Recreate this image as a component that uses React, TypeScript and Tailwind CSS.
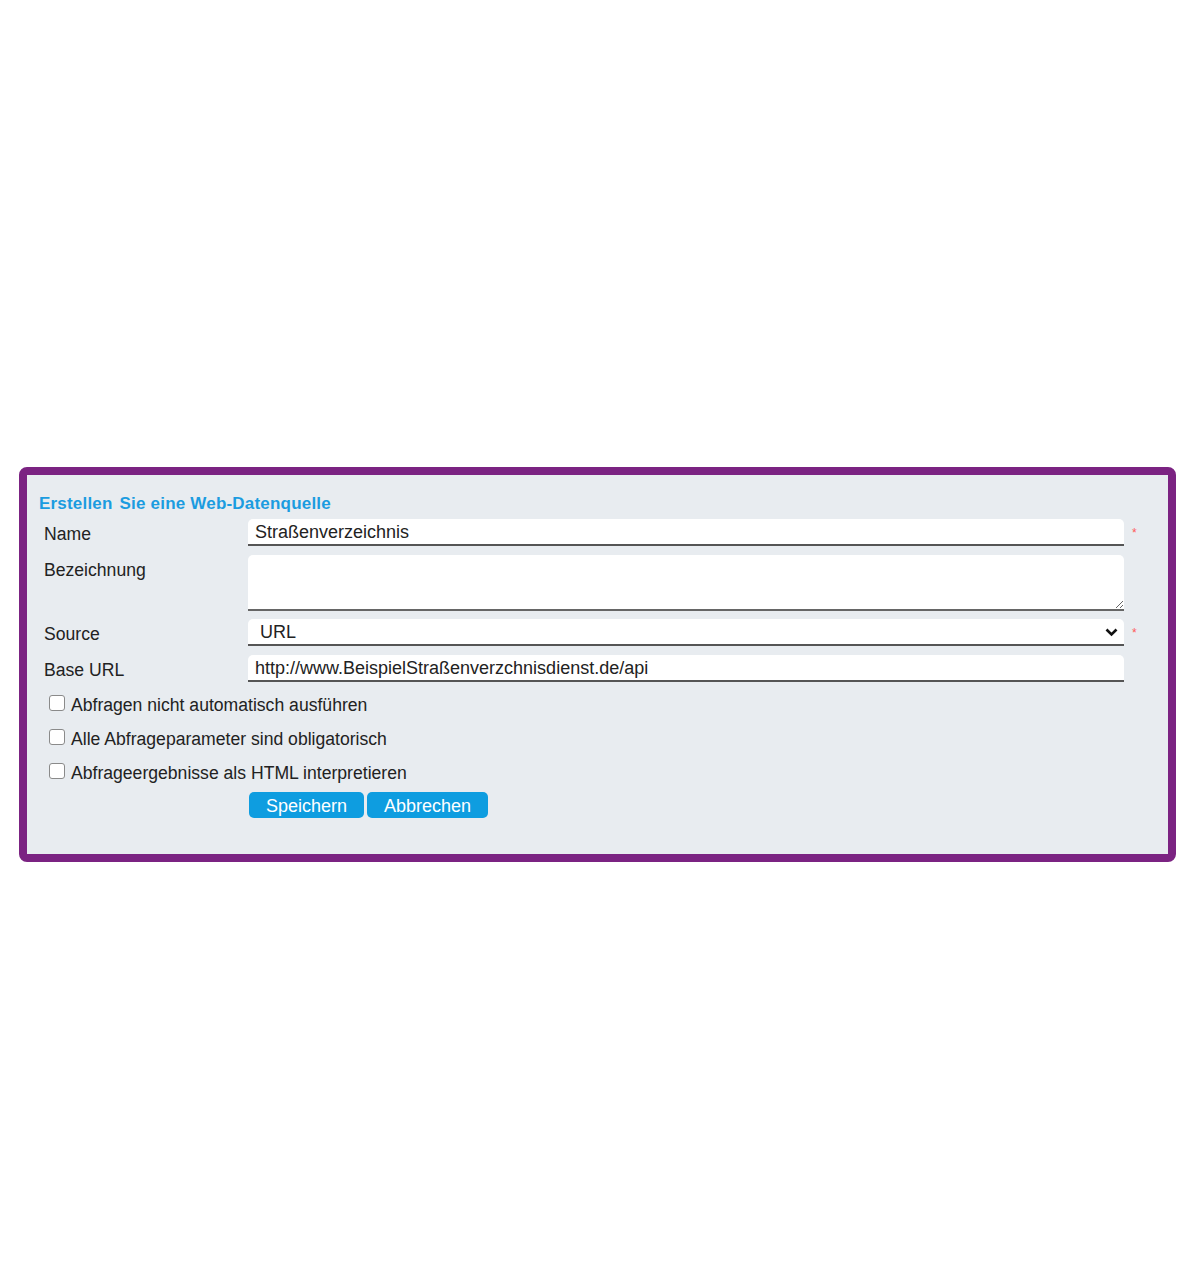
import React from "react";

const Req = () => (
  <span className="ml-[8px] text-[#ff5a5a] text-[12px] leading-none w-[6px]">*</span>
);

const Check = ({ label }: { label: string }) => (
  <label className="flex items-center h-[34px] pl-[10px]">
    <span className="w-[16px] h-[16px] rounded-[3px] border-[1.5px] border-[#8a8a8a] bg-white mb-[3px]" />
    <span className="ml-[6px] text-[17.6px] text-[#222] pt-[2px]">{label}</span>
  </label>
);

export default function App() {
  return (
    <div
      className="w-[1200px] h-[1285px] bg-white pt-[467px] pl-[19px]"
      style={{ fontFamily: '"Liberation Sans", Arial, sans-serif' }}
    >
      <div className="w-[1157px] h-[395px] border-[8px] border-[#7b2382] rounded-[8px] bg-[#e8ecf0] pt-[19px] pl-[12px]">
        <div className="text-[17px] font-bold text-[#1b9ce0] leading-[20px] tracking-[0.2px]">
          Erstellen <span className="ml-[2px]">Sie eine Web-Datenquelle</span>
        </div>
        <div className="mt-[5px] flex items-center h-[27px]">
          <div className="w-[209px] pl-[5px] text-[17.6px] leading-[20px] text-[#222] pt-[2px]">Name</div>
          <div className="w-[876px] h-[27px] bg-white rounded-t-[5px] border-b-2 border-[#555] pl-[7px] pt-[2px] flex items-center text-[18px] text-[#222]">
            Straßenverzeichnis
          </div>
          <Req />
        </div>
        <div className="mt-[9px] flex items-start">
          <div className="w-[209px] pl-[5px] text-[17.6px] text-[#222] pt-[2px]">Bezeichnung</div>
          <textarea className="w-[876px] h-[56px] bg-white rounded-t-[5px] border-b-2 border-[#666] outline-none resize-y block" />
        </div>
        <div className="mt-[8px] flex items-center h-[27px]">
          <div className="w-[209px] pl-[5px] text-[17.6px] leading-[20px] text-[#222] pt-[2px]">Source</div>
          <div className="w-[876px] h-[27px] bg-white rounded-t-[5px] border-b-2 border-[#555] pl-[12px] pr-[6px] pt-[2px] flex items-center justify-between text-[18px] text-[#222]">
            <span>URL</span>
            <svg width="13" height="9" viewBox="0 0 13 9">
              <path d="M1.5 1.5 L6.5 6.5 L11.5 1.5" fill="none" stroke="#111" strokeWidth="2.6" />
            </svg>
          </div>
          <Req />
        </div>
        <div className="mt-[9px] flex items-center h-[27px]">
          <div className="w-[209px] pl-[5px] text-[17.6px] leading-[20px] text-[#222] pt-[2px]">Base URL</div>
          <div className="w-[876px] h-[27px] bg-white rounded-t-[5px] border-b-2 border-[#555] pl-[7px] pt-[2px] flex items-center text-[18px] text-[#222]">
            http://www.BeispielStraßenverzchnisdienst.de/api
          </div>
        </div>
        <div className="mt-[5px]">
          <Check label="Abfragen nicht automatisch ausführen" />
          <Check label="Alle Abfrageparameter sind obligatorisch" />
          <Check label="Abfrageergebnisse als HTML interpretieren" />
        </div>
        <div className="mt-[3px] pl-[210px] flex gap-[3px]">
          <button className="w-[115px] h-[26px] rounded-[5px] bg-[#0e9de0] text-white text-[18px] leading-none pt-[1px]">
            Speichern
          </button>
          <button className="w-[121px] h-[26px] rounded-[5px] bg-[#0e9de0] text-white text-[18px] leading-none pt-[1px]">
            Abbrechen
          </button>
        </div>
      </div>
    </div>
  );
}
